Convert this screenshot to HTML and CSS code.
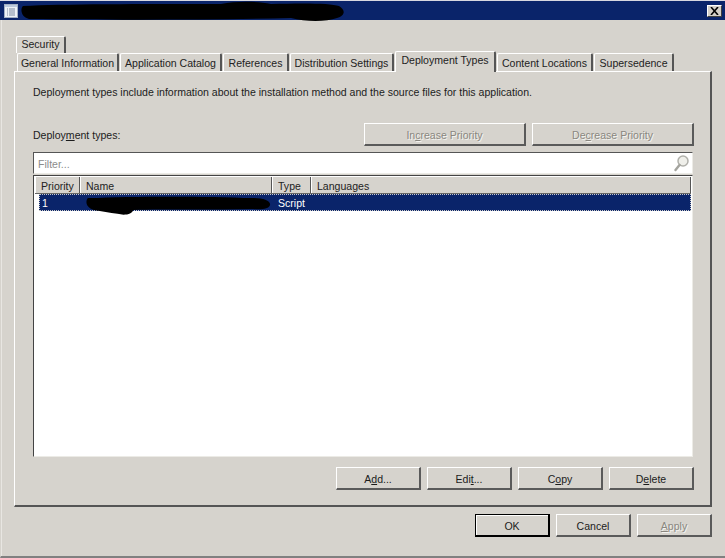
FILE: index.html
```html
<!DOCTYPE html>
<html lang="en">
<head>
<meta charset="utf-8">
<title>Properties</title>
<link rel="stylesheet" href="styles.css">
</head>
<body>
<div class="window">
  <header class="titlebar">
    <svg class="app-icon" width="14" height="14" viewBox="0 0 14 14">
      <rect x="0.5" y="0.5" width="13" height="13" fill="#eef2f7" stroke="#a3b0c4"/>
      <rect x="1" y="1" width="12" height="2" fill="#bccadd"/>
      <path d="M3 5h1M5 5h6M3 7h1M5 7h6M3 9h1M5 9h6M3 11h1M5 11h6" stroke="#7c8ba3" fill="none"/>
    </svg>
    <span class="title-dot">.</span>
    <button class="close" type="button" aria-label="Close">
      <svg width="9" height="8" viewBox="0 0 9 8"><path d="M1 0l7 8M8 0L1 8" stroke="#000" stroke-width="1.6" fill="none"/></svg>
    </button>
    <svg class="redact redact-title" width="324" height="22" viewBox="0 0 324 22">
      <path d="M2 5C40 3 120 3 200 3C215 0 235 0 250 3C280 2 310 2 318 5C325 9 324 15 316 17C305 21 285 21 270 17C190 19 90 19 8 18C0 16 -1 8 2 5Z" fill="#000"/>
    </svg>
  </header>

  <main class="content">
    <div class="tab-row tab-row-back">
      <div class="tab tab-security">Security</div>
    </div>
    <div class="tab-row tab-row-front">
      <div class="tab tab-general">General Information</div>
      <div class="tab tab-catalog">Application Catalog</div>
      <div class="tab tab-refs">References</div>
      <div class="tab tab-dist">Distribution Settings</div>
      <div class="tab tab-active">Deployment Types</div>
      <div class="tab tab-loc">Content Locations</div>
      <div class="tab tab-super">Supersedence</div>
    </div>

    <section class="panel">
      <p class="intro">Deployment types include information about the installation method and the source files for this application.</p>
      <div class="priority-row">
        <span class="label">Deploy<u>m</u>ent types:</span>
        <div class="priority-btns">
          <button class="btn btn-wide disabled" type="button">In<u>c</u>rease Priority</button>
          <button class="btn btn-wide disabled" type="button">De<u>c</u>rease Priority</button>
        </div>
      </div>

      <div class="filter">
        <span class="filter-text">Filter...</span>
        <svg class="search-icon" width="15" height="17" viewBox="0 0 15 17">
          <circle cx="9" cy="6" r="5" fill="#efefea" stroke="#b0b0aa" stroke-width="1.5"/>
          <path d="M5.5 10L1.5 15" stroke="#a4a49e" stroke-width="2.4" stroke-linecap="round"/>
        </svg>
      </div>

      <div class="list">
        <div class="list-head">
          <div class="col col-priority">Priority</div>
          <div class="col col-name">Name</div>
          <div class="col col-type">Type</div>
          <div class="col col-lang">Languages</div>
        </div>
        <div class="list-row">
          <span class="cell cell-priority">1</span>
          <span class="cell cell-name"></span>
          <span class="cell cell-type">Script</span>
          <svg class="redact redact-row" width="185" height="22" viewBox="0 0 188 22">
            <path d="M2 4C50 2 120 2 170 4C180 4 188 7 187 11C186 15 178 16 170 15C130 16 80 15 48 16C47 20 40 22 32 20C24 19 16 17 8 16C0 14 -1 7 2 4Z" fill="#000"/>
          </svg>
        </div>
      </div>

      <div class="action-row">
        <button class="btn" type="button">A<u>d</u>d...</button>
        <button class="btn" type="button">Edi<u>t</u>...</button>
        <button class="btn" type="button">C<u>o</u>py</button>
        <button class="btn" type="button">D<u>e</u>lete</button>
      </div>
    </section>

    <footer class="dialog-row">
      <button class="btn btn-default" type="button">OK</button>
      <button class="btn" type="button">Cancel</button>
      <button class="btn disabled" type="button"><u>A</u>pply</button>
    </footer>
  </main>
</div>
</body>
</html>
```

FILE: styles.css
```css
* { box-sizing: border-box; }

html, body {
  margin: 0;
  padding: 0;
}

body {
  width: 725px;
  height: 558px;
  overflow: hidden;
  background: #d4d0c8;
  font-family: "Liberation Sans", Arial, sans-serif;
  font-size: 10.55px;
  color: #1c1c1c;
}

.window {
  position: relative;
  width: 725px;
  height: 558px;
  background: #d6d3cd;
  border-left: 1px solid #d6d3cd;
  border-bottom: 2px solid #808080;
  box-shadow: inset 1px 0 0 #e8e6e2;
}

.titlebar {
  position: relative;
  display: flex;
  align-items: center;
  height: 20px;
  margin-left: -1px;
  padding: 1px 3px 0 4px;
  background: #0a246a;
  border-top: 1px solid #d8d8e0;
}

.app-icon { flex: none; }

.title-dot {
  margin-left: 6px;
  color: #fff;
}

.close {
  display: flex;
  align-items: center;
  justify-content: center;
  width: 15px;
  height: 12px;
  margin-left: auto;
  padding: 0;
  background: #d4d0c8;
  border: 1px solid;
  border-color: #fff #404040 #404040 #fff;
}

.redact { position: absolute; }

.redact-title {
  left: 21px;
  top: 0;
}

.content {
  padding: 16px 13px 0 13px;
}

.tab-row {
  display: flex;
  align-items: flex-end;
}

.tab-row-back {
  height: 17px;
  padding-left: 2px;
}

.tab-row-front {
  position: relative;
  z-index: 1;
  height: 18px;
  padding-left: 3px;
  gap: 1px;
}

.tab {
  display: flex;
  align-items: center;
  justify-content: center;
  height: 18px;
  background: #d6d3cd;
  border-top: 1px solid #fff;
  border-left: 1px solid #fff;
  border-right: 2px solid #555;
  border-radius: 2px 2px 0 0;
  color: #222;
  white-space: nowrap;
}

.tab-security { width: 50px; height: 17px; padding-bottom: 2px; }
.tab-general { width: 102px; }
.tab-catalog { width: 102px; }
.tab-refs { width: 66px; }
.tab-dist { width: 104px; }
.tab-loc { width: 96px; }
.tab-super { width: 80px; }

.tab-active {
  width: 101px;
  height: 21px;
  margin-bottom: -1px;
  padding-bottom: 4px;
  background: #d6d3cd;
}

.panel {
  width: 698px;
  height: 436px;
  padding: 13px 16px 0 18px;
  background: #d6d3cd;
  border-top: 1px solid #fff;
  border-left: 1px solid #fff;
  border-right: 2px solid #555;
  border-bottom: 2px solid #555;
}

.intro {
  margin: 0;
  height: 14px;
  line-height: 14px;
  color: #1c1c1c;
}

.priority-row {
  display: flex;
  align-items: center;
  justify-content: space-between;
  height: 23px;
  margin-top: 24px;
}

.priority-btns {
  display: flex;
  gap: 6px;
}

.btn {
  width: 85px;
  height: 23px;
  padding: 2px 0 0 0;
  background: #d6d3cd;
  border-style: solid;
  border-width: 1px 2px 2px 1px;
  border-color: #fff #5a5a5a #5a5a5a #fff;
  font: inherit;
  color: #1c1c1c;
}

.btn-wide { width: 162px; }

.disabled {
  color: #8a8780;
  text-shadow: 1px 1px 0 #f4f3f0;
}

.btn-default {
  border: 2px solid #000;
  border-width: 1px 2px 2px 1px;
  border-color: #000;
  box-shadow: inset 1px 1px 0 #fff;
}

.filter {
  display: flex;
  align-items: center;
  justify-content: space-between;
  width: 660px;
  height: 22px;
  margin-top: 6px;
  padding: 1px 3px 0 4px;
  background: #fff;
  border-top: 1px solid #555;
  border-left: 1px solid #555;
  border-right: 1px solid #ecebe6;
  border-bottom: 1px solid #ecebe6;
}

.filter-text { color: #8c8c8c; }

.list {
  width: 660px;
  height: 282px;
  margin-top: 1px;
  background: #fff;
  border-top: 1px solid #444;
  border-left: 1px solid #444;
  border-right: 1px solid #ecebe6;
  border-bottom: 1px solid #ecebe6;
}

.list-head {
  display: flex;
  height: 17px;
  margin: 1px 1px 0 1px;
  border-bottom: 1px solid #666;
  background: #d6d3cd;
}

.col {
  display: flex;
  align-items: center;
  padding: 1px 0 0 5px;
  background: #d6d3cd;
  border-left: 1px solid #fff;
  border-right: 1px solid #555;
  color: #222;
  white-space: nowrap;
}

.col-priority { width: 45px; }
.col-name { width: 192px; }
.col-type { width: 39px; }
.col-lang { flex: 1; }

.list-row {
  position: relative;
  display: flex;
  align-items: center;
  height: 17px;
  margin: 0 1px 0 5px;
  background: #0a246a;
  outline: 1px dotted #c9c9c9;
  outline-offset: -1px;
  color: #fff;
}

.cell-priority {
  width: 40px;
  padding-left: 3px;
}

.cell-name { width: 192px; }
.cell-type { padding-left: 7px; }

.redact-row {
  left: 47px;
  top: 0;
}

.action-row {
  display: flex;
  justify-content: flex-end;
  gap: 6px;
  margin-top: 10px;
}

.dialog-row {
  display: flex;
  justify-content: flex-end;
  gap: 6px;
  width: 698px;
  margin-top: 7px;
}

.dialog-row .btn { width: 75px; }
```
